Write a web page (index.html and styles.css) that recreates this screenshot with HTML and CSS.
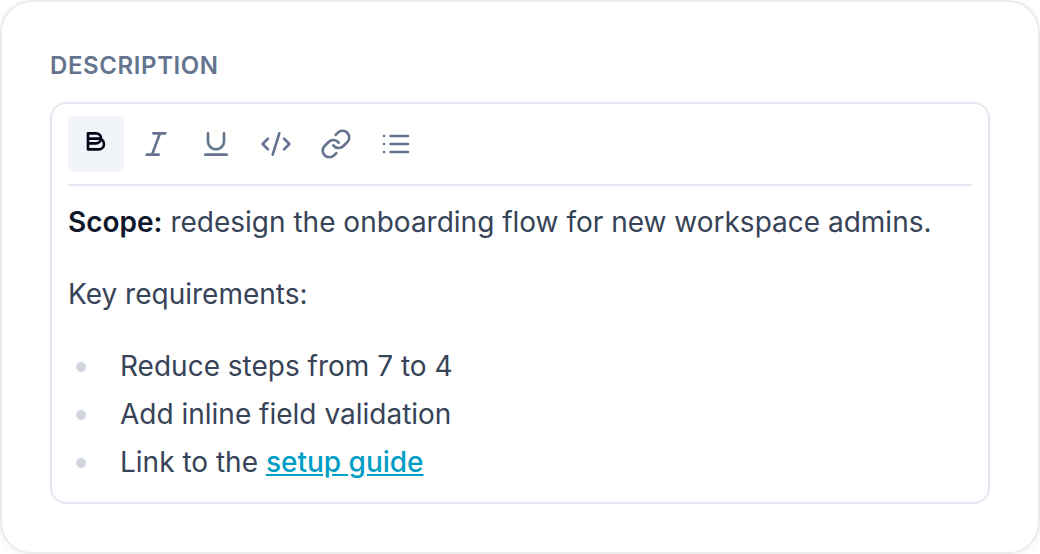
FILE: index.html
```
<!DOCTYPE html>
<html lang="en">
<head>
<meta charset="utf-8">
<title>Description</title>
<link rel="stylesheet" href="styles.css">
</head>
<body>
<section class="card">
  <h2 class="label">DESCRIPTION</h2>
  <div class="editor">
    <div class="toolbar">
      <button class="tool active" aria-label="Bold"><svg viewBox="0 0 24 24"><path d="M6 4h6a3.750 3.750 0 0 1 0 7.500H6zM6 8h8a4 4 0 0 1 0 8H6z"/></svg></button>
      <button class="tool" aria-label="Italic"><svg viewBox="0 0 24 24"><path d="M19 4h-9M14 20H5M15 4 9 20"/></svg></button>
      <button class="tool" aria-label="Underline"><svg viewBox="0 0 24 24"><path d="M6 4v6a6 6 0 0 0 12 0V4M4 20h16"/></svg></button>
      <button class="tool" aria-label="Code"><svg viewBox="0 0 24 24"><path d="m18 16 4-4-4-4M6 8l-4 4 4 4M14.500 4l-5 16"/></svg></button>
      <button class="tool" aria-label="Link"><svg viewBox="0 0 24 24"><path d="M10 13a5 5 0 0 0 7.540.540l3-3a5 5 0 0 0-7.070-7.070l-1.720 1.710M14 11a5 5 0 0 0-7.540-.540l-3 3a5 5 0 0 0 7.070 7.070l1.710-1.710"/></svg></button>
      <button class="tool" aria-label="List"><svg viewBox="0 0 24 24"><path d="M8 6h13M8 12h13M8 18h13M3 6h.010M3 12h.010M3 18h.010"/></svg></button>
    </div>
    <div class="content">
      <p><strong>Scope:</strong> redesign the onboarding flow for new workspace admins.</p>
      <p>Key requirements:</p>
      <ul><li>Reduce steps from 7 to 4</li><li>Add inline field validation</li><li>Link to the <a href="#">setup guide</a></li></ul>
    </div>
  </div>
</section>
</body>
</html>
```
FILE: styles.css
```
* { box-sizing: border-box; }
body { margin: 0; background: #fff; font-family: Inter, sans-serif; overflow: hidden; }
.card { height: 554px; padding: 48px; border: 2px solid #ebebec; border-radius: 32px; box-shadow: 0 2px 6px rgba(0, 0, 0, .06); }
.label { margin: 0 0 20px; font-size: 24px; line-height: 32px; font-weight: 600; letter-spacing: .6px; color: #64748f; }
.editor { height: 402px; border: 2px solid #e2e7f1; border-radius: 16px; padding: 12px 16px; }
.toolbar { display: flex; gap: 4px; height: 70px; border-bottom: 2px solid #e2e8f1; }
.tool { display: grid; place-items: center; width: 56px; height: 56px; padding: 0; border: 0; border-radius: 8px; background: none; color: #64748f; }
.tool svg { width: 32px; height: 32px; fill: none; stroke: currentColor; stroke-width: 2; stroke-linecap: round; stroke-linejoin: round; }
.active { background: #f1f4f9; color: #020618; }
.content { padding-top: 12px; font-size: 28px; line-height: 48px; color: #374357; }
.content p { margin: 0 0 24px; }
.content strong { font-weight: 600; color: #0f172b; }
.content ul { margin: 0; padding: 0; list-style: none; }
.content li { display: flex; align-items: center; white-space: pre; }
.content li::before { content: ""; width: 10px; height: 10px; margin: 2px 34px 0 8px; border-radius: 50%; background: #cfd5dd; }
.content a { color: #009dc4; font-weight: 500; text-decoration: underline; }
```
